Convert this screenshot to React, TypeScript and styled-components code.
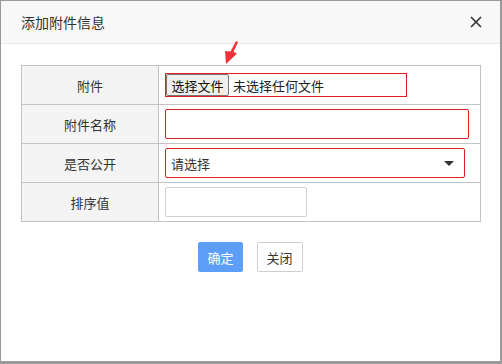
import React from "react";
import styled, { createGlobalStyle } from "styled-components";

const GlobalStyle = createGlobalStyle`
  html, body {
    margin: 0;
    padding: 0;
    background: #9a9a9a;
  }
  body {
    font-family: "Microsoft YaHei", "Noto Sans CJK SC", sans-serif;
    color: #333;
  }
`;

const Frame = styled.div`
  width: 502px;
  height: 364px;
  box-sizing: border-box;
  padding: 1px 2px 3px 1px;
  background: #9a9a9a;
`;

const Dialog = styled.div`
  position: relative;
  height: 100%;
  background: #fff;
  display: flex;
  flex-direction: column;
`;

const Header = styled.div`
  height: 42px;
  flex-shrink: 0;
  display: flex;
  align-items: center;
  justify-content: space-between;
  padding: 0 17px 0 20px;
  background: #f8f8f8;
  border-bottom: 1px solid #eaeaea;
`;

const Title = styled.span`
  font-size: 14px;
  color: #333;
`;

const CloseBtn = styled.button`
  border: 0;
  background: none;
  padding: 0;
  width: 14px;
  height: 14px;
  display: flex;
  align-items: center;
  justify-content: center;
  cursor: pointer;
`;

const Body = styled.div`
  padding: 21px 20px 0 20px;
`;

const FormTable = styled.table`
  width: 460px;
  border-collapse: collapse;
  font-size: 13px;
`;

const Row = styled.tr`
  height: 39px;
`;

const Label = styled.td`
  width: 136px;
  padding: 0;
  text-align: center;
  background: #f4f4f4;
  border: 1px solid #c2c2c2;
  color: #333;
`;

const Field = styled.td`
  padding: 0 0 0 6px;
  border: 1px solid #c2c2c2;
  vertical-align: middle;
`;

const FileBox = styled.div`
  width: 242px;
  height: 24px;
  box-sizing: border-box;
  border: 1px solid #e02020;
  display: flex;
  align-items: center;
  gap: 4px;
`;

const FileButton = styled.span`
  height: 22px;
  width: 63px;
  box-sizing: border-box;
  display: flex;
  align-items: center;
  justify-content: center;
  background: #efefef;
  border: 1px solid #767676;
  border-radius: 2px;
  font-size: 13px;
  color: #111;
`;

const FileText = styled.span`
  font-size: 13px;
  color: #222;
`;

const TextInput = styled.div<{ $w: number; $h: number; $error?: boolean }>`
  width: ${(p) => p.$w}px;
  height: ${(p) => p.$h}px;
  box-sizing: border-box;
  border: 1px solid ${(p) => (p.$error ? "#e02020" : "#d0d0d0")};
  border-radius: 2px;
  background: #fff;
`;

const SelectBox = styled.div`
  width: 300px;
  height: 30px;
  box-sizing: border-box;
  border: 1px solid #e02020;
  border-radius: 2px;
  display: flex;
  align-items: center;
  justify-content: space-between;
  padding: 0 10px 0 5px;
  font-size: 13px;
  color: #333;
`;

const Caret = styled.span`
  width: 0;
  height: 0;
  border-left: 5px solid transparent;
  border-right: 5px solid transparent;
  border-top: 5px solid #333;
`;

const Actions = styled.div`
  display: flex;
  justify-content: center;
  gap: 14px;
  margin-top: 20px;
`;

const Button = styled.button<{ $primary?: boolean }>`
  height: 30px;
  padding: 0 ${(p) => (p.$primary ? 8 : 9)}px;
  box-sizing: border-box;
  border-radius: 2px;
  font-family: inherit;
  font-size: 13px;
  border: 1px solid ${(p) => (p.$primary ? "#5c9ef8" : "#cfcfcf")};
  background: ${(p) => (p.$primary ? "#5c9ef8" : "#fff")};
  color: ${(p) => (p.$primary ? "#fff" : "#333")};
  cursor: pointer;
`;

const Pointer = styled.svg`
  position: absolute;
  left: 220px;
  top: 38px;
`;

export default function App() {
  return (
    <>
      <GlobalStyle />
      <Frame>
        <Dialog>
          <Header>
            <Title>添加附件信息</Title>
            <CloseBtn aria-label="close">
              <svg width="12" height="12" viewBox="0 0 12 12">
                <path d="M1 1 L11 11 M11 1 L1 11" stroke="#333" strokeWidth="1.6" />
              </svg>
            </CloseBtn>
          </Header>
          <Pointer width="20" height="27" viewBox="0 0 20 27">
            <path d="M15 2 L17 3 L12.5 13 L16 14.5 L5 25 L4 12 L9.5 12.5 Z" fill="#f0313a" />
          </Pointer>
          <Body>
            <FormTable>
              <tbody>
                <Row>
                  <Label>附件</Label>
                  <Field>
                    <FileBox>
                      <FileButton>选择文件</FileButton>
                      <FileText>未选择任何文件</FileText>
                    </FileBox>
                  </Field>
                </Row>
                <Row>
                  <Label>附件名称</Label>
                  <Field>
                    <TextInput $w={304} $h={30} $error />
                  </Field>
                </Row>
                <Row>
                  <Label>是否公开</Label>
                  <Field>
                    <SelectBox>
                      <span>请选择</span>
                      <Caret />
                    </SelectBox>
                  </Field>
                </Row>
                <Row>
                  <Label>排序值</Label>
                  <Field>
                    <TextInput $w={142} $h={30} />
                  </Field>
                </Row>
              </tbody>
            </FormTable>
            <Actions>
              <Button $primary>确定</Button>
              <Button>关闭</Button>
            </Actions>
          </Body>
        </Dialog>
      </Frame>
    </>
  );
}
